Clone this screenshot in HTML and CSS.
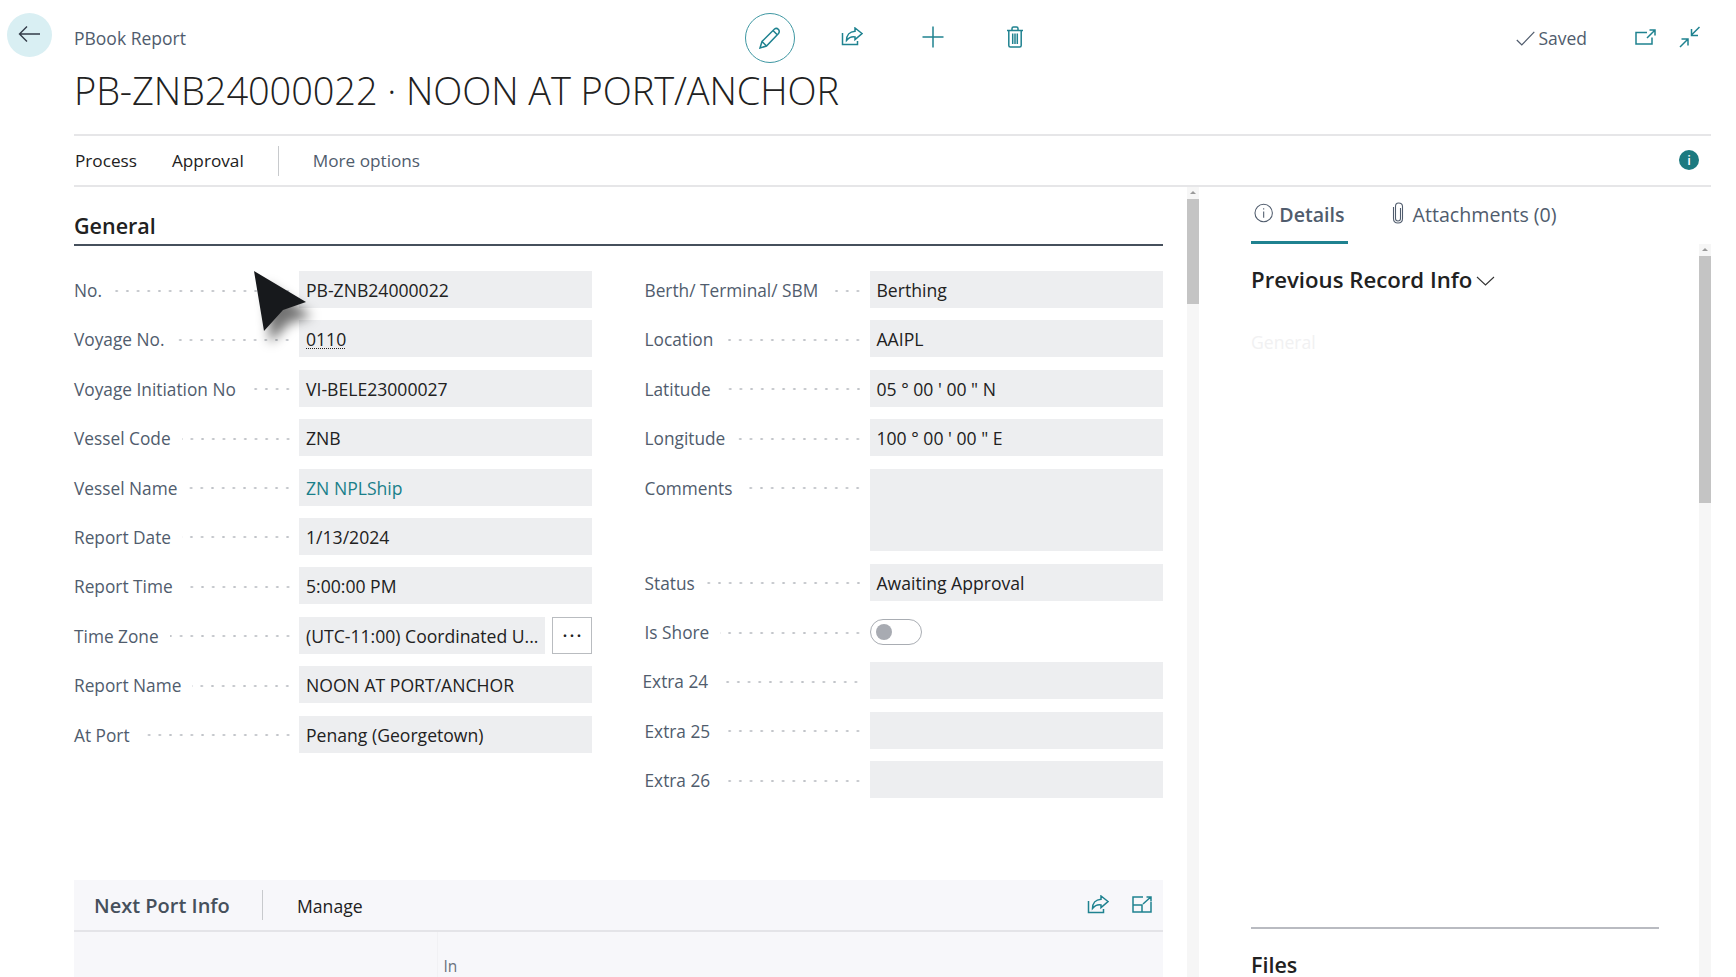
FILE: index.html
```html
<!DOCTYPE html>
<html lang="en">
<head>
<meta charset="UTF-8">
<meta name="viewport" content="width=device-width, initial-scale=1.0">
<title>PBook Report</title>
<link rel="stylesheet" href="styles.css">
</head>
<body>

<div class="page">
  <header class="top">
    <button class="back" type="button" aria-label="Back">
      <svg width="23" height="18" viewBox="0 0 23 18"><path d="M22 9H1.500M9 1.500L1.500 9L9 16.500"/></svg>
    </button>
    <div class="crumb">PBook Report</div>
    <div class="toolbar">
      <button class="tool tool-edit" type="button" aria-label="Edit">
        <svg width="22" height="22" viewBox="0 0 22 22"><path d="M1 21L3 14.500L15.500 2Q17.500 0.500 19.500 2.500Q21 4.500 19.500 6.500L7.500 19ZM3 14.500L7.500 19M14 3.500L18.500 8"/></svg>
      </button>
      <button class="tool" type="button" aria-label="Share">
        <svg width="22" height="19" viewBox="0 0 22 19"><path d="M1.500 6V17.500H16.500V14M21 6.500L14 1V4.200C8.500 4.500 5.500 8.500 5.500 13.500C8 10.500 11 9.500 14 10V12.500Z"/></svg>
      </button>
      <button class="tool" type="button" aria-label="New">
        <svg width="22" height="22" viewBox="0 0 22 22"><path d="M11 0.500V21.500M0.500 11H21.500"/></svg>
      </button>
      <button class="tool" type="button" aria-label="Delete">
        <svg width="18" height="22" viewBox="0 0 18 22"><path d="M1 4.500H17M6 4.500V2.500Q6 1 7.500 1H10.500Q12 1 12 2.500V4.500M2.800 4.500V19.500Q2.800 21 4.300 21H13.700Q15.200 21 15.200 19.500V4.500M6.700 7.500V18M9 7.500V18M11.300 7.500V18"/></svg>
      </button>
    </div>
    <div class="top-right">
      <div class="saved">
        <svg width="19" height="15" viewBox="0 0 19 15"><path d="M0.800 9L5.800 14L18.300 0.800"/></svg>
        Saved
      </div>
      <button class="tool" type="button" aria-label="Open in new window">
        <svg width="21" height="16" viewBox="0 0 21 16"><path d="M12 3.500H1V15H17V8.500M12 9L19.800 1.200M14.500 1H20V6.500"/></svg>
      </button>
      <button class="tool" type="button" aria-label="Collapse">
        <svg width="21" height="22" viewBox="0 0 21 22"><path d="M20.500 1L12.500 9M12.500 3V9.500H19M1 21L9 13M2.500 13H9V19.500"/></svg>
      </button>
    </div>
  </header>

  <h1 class="title">PB-ZNB24000022 · NOON AT PORT/ANCHOR</h1>

  <nav class="actions">
    <a class="action">Process</a>
    <a class="action action-approval">Approval</a>
    <span class="action-sep"></span>
    <a class="action action-more">More options</a>
    <span class="info-dot">i</span>
  </nav>

  <div class="content">
    <main class="left">
      <h2 class="section-title">General</h2>

      <div class="form-grid">
        <div class="form-col">
          <div class="field"><span class="label">No.<i class="dots"></i></span><span class="value">PB-ZNB24000022</span></div>
          <div class="field"><span class="label">Voyage No.<i class="dots"></i></span><span class="value"><u class="dotted">0110</u></span></div>
          <div class="field"><span class="label">Voyage Initiation No<i class="dots"></i></span><span class="value">VI-BELE23000027</span></div>
          <div class="field"><span class="label">Vessel Code<i class="dots"></i></span><span class="value">ZNB</span></div>
          <div class="field"><span class="label">Vessel Name<i class="dots"></i></span><span class="value value-link">ZN NPLShip</span></div>
          <div class="field"><span class="label">Report Date<i class="dots"></i></span><span class="value">1/13/2024</span></div>
          <div class="field"><span class="label">Report Time<i class="dots"></i></span><span class="value">5:00:00 PM</span></div>
          <div class="field"><span class="label">Time Zone<i class="dots"></i></span><span class="value">(UTC-11:00) Coordinated U...</span><button class="more-btn" type="button" aria-label="Choose">···</button></div>
          <div class="field"><span class="label">Report Name<i class="dots"></i></span><span class="value">NOON AT PORT/ANCHOR</span></div>
          <div class="field"><span class="label">At Port<i class="dots"></i></span><span class="value">Penang (Georgetown)</span></div>
        </div>

        <div class="form-col">
          <div class="field"><span class="label">Berth/ Terminal/ SBM<i class="dots"></i></span><span class="value">Berthing</span></div>
          <div class="field"><span class="label">Location<i class="dots"></i></span><span class="value">AAIPL</span></div>
          <div class="field"><span class="label">Latitude<i class="dots"></i></span><span class="value">05 ° 00 ' 00 " N</span></div>
          <div class="field"><span class="label">Longitude<i class="dots"></i></span><span class="value">100 ° 00 ' 00 " E</span></div>
          <div class="field field-tall"><span class="label">Comments<i class="dots"></i></span><span class="value"></span></div>
          <div class="field"><span class="label">Status<i class="dots"></i></span><span class="value">Awaiting Approval</span></div>
          <div class="field"><span class="label">Is Shore<i class="dots"></i></span><span class="toggle"><i class="knob"></i></span></div>
          <div class="field field-shift"><span class="label">Extra 24<i class="dots"></i></span><span class="value"></span></div>
          <div class="field"><span class="label">Extra 25<i class="dots"></i></span><span class="value"></span></div>
          <div class="field"><span class="label">Extra 26<i class="dots"></i></span><span class="value"></span></div>
        </div>
      </div>

      <section class="part">
        <div class="part-head">
          <span class="part-title">Next Port Info</span>
          <span class="part-sep"></span>
          <span class="part-manage">Manage</span>
          <div class="part-tools">
            <button class="tool" type="button" aria-label="Share">
              <svg width="22" height="19" viewBox="0 0 22 19"><path d="M1.500 6V17.500H16.500V14M21 6.500L14 1V4.200C8.500 4.500 5.500 8.500 5.500 13.500C8 10.500 11 9.500 14 10V12.500Z"/></svg>
            </button>
            <button class="tool" type="button" aria-label="Expand">
              <svg width="20" height="17" viewBox="0 0 20 17"><path d="M11 1H1V16H19V6M1 9H10V16M11 8L18.500 1.200M14.500 1H19V5.500"/></svg>
            </button>
          </div>
        </div>
        <div class="part-body"><span class="part-col">In</span></div>
      </section>
    </main>

    <div class="scroll scroll-main">
      <i class="scroll-arrow"></i>
      <i class="scroll-thumb"></i>
    </div>

    <aside class="pane">
      <div class="tabs">
        <div class="tab tab-active">
          <svg width="20" height="20" viewBox="0 0 20 20"><circle cx="10" cy="10" r="9"/><path d="M10 8.500V15M10 5V6.500"/></svg>
          Details
        </div>
        <div class="tab tab-files">
          <svg width="12" height="22" viewBox="0 0 12 22"><path d="M8.500 6V16.500Q8.500 19 6 19Q3.500 19 3.500 16.500V4.500Q3.500 1 6.500 1Q10.500 1 10.500 4.500V16.500Q10.500 21 6 21Q1.500 21 1.500 16.500V5"/></svg>
          Attachments (0)
        </div>
      </div>
      <h3 class="pane-title">Previous Record Info
        <svg width="19" height="10" viewBox="0 0 19 10"><path d="M1 1L9.500 9L18 1"/></svg>
      </h3>
      <div class="pane-ghost">General</div>
      <div class="pane-files">Files</div>
    </aside>

    <div class="scroll scroll-pane">
      <i class="scroll-arrow"></i>
      <i class="scroll-thumb"></i>
    </div>
  </div>

  <div class="cursor">
    <svg width="90" height="90" viewBox="0 0 90 90">
      <defs><filter id="soft" x="-40%" y="-40%" width="180%" height="180%"><feGaussianBlur stdDeviation="6"/></filter></defs>
      <path class="cursor-shadow" d="M16 14L62 46L39 53L20 73Z" filter="url(#soft)"/>
      <path class="cursor-arrow" d="M4 1L56 32L33 40L14 61Z"/>
    </svg>
  </div>
</div>

</body>
</html>
```

FILE: styles.css
```css
* {
  box-sizing: border-box;
}
body {
  margin: 0;
  background-color: #fff;
  color: #212121;
  font-family: 'Open Sans', 'Noto Sans', sans-serif;
}
button {
  padding: 0;
  border: none;
  background: none;
  font-family: inherit;
}
svg {
  display: block;
  fill: none;
  stroke-width: 1.5;
}
.page {
  position: relative;
  width: 1736px;
  height: 977px;
  overflow: hidden;
}

/* top bar */
.top {
  display: flex;
  align-items: center;
  height: 63px;
  padding: 13px 36px 0 7px;
}
.back {
  display: flex;
  align-items: center;
  justify-content: center;
  align-self: flex-start;
  width: 45px;
  height: 44px;
  margin-right: 22px;
  border-radius: 50%;
  background-color: #d9eff3;
}
.back svg {
  stroke: #333c48;
  stroke-width: 1.4;
  margin-top: -2px;
}
.crumb {
  width: 671px;
  font-size: 17.5px;
  color: #505c6d;
}
.toolbar {
  display: flex;
  align-items: center;
  gap: 59.5px;
}
.tool {
  display: flex;
  align-items: center;
  justify-content: center;
  width: 22px;
  height: 22px;
}
.tool svg {
  stroke: #1f8290;
}
.toolbar .tool svg,
.top-right .tool svg {
  margin-top: -3px;
}
.toolbar .tool-edit svg {
  margin-top: 0;
}
.tool-edit {
  width: 50px;
  height: 50px;
  margin-right: -14px;
  border: 1.5px solid #3f98a3;
  border-radius: 50%;
}
.top-right {
  display: flex;
  align-items: center;
  gap: 22px;
  margin-left: auto;
}
.saved {
  display: flex;
  align-items: center;
  gap: 3px;
  margin-right: 25px;
  font-size: 17.5px;
  color: #505c6d;
}
.saved svg {
  stroke: #505c6d;
  stroke-width: 1.2;
}
.title {
  height: 56px;
  margin: 0 0 15px 74px;
  font-size: 38px;
  font-weight: 300;
  line-height: 54px;
  letter-spacing: -0.1px;
  white-space: nowrap;
}

/* action bar */
.actions {
  display: flex;
  align-items: center;
  height: 53px;
  margin: 0 25px 0 74px;
  padding-right: 12px;
  border-top: 2px solid #e6e6e8;
  border-bottom: 2px solid #e6e6e8;
  font-size: 17.2px;
}
.action {
  margin-left: 1px;
}
.action-approval {
  margin-left: 35px;
}
.action-sep {
  width: 1px;
  height: 30px;
  margin: 0 34px;
  background-color: #c8cacd;
}
.action-more {
  margin-left: 0;
  color: #505c6d;
}
.info-dot {
  width: 20px;
  height: 20px;
  margin-left: auto;
  margin-top: -2px;
  border-radius: 50%;
  background-color: #1c7a80;
  color: #fff;
  font-size: 13px;
  font-weight: 600;
  line-height: 20px;
  text-align: center;
}

/* main area */
.content {
  display: flex;
  height: 790px;
}
.left {
  width: 1088.5px;
  margin-left: 74px;
}
.section-title {
  height: 59px;
  margin: 0;
  padding-top: 20px;
  border-bottom: 2px solid #46505c;
  font-size: 21.5px;
  font-weight: 600;
  line-height: 38px;
}
.form-grid {
  display: grid;
  grid-template-columns: 518px 518px;
  gap: 52.5px;
  height: 608.6px;
  margin-top: 25px;
}
.field {
  display: flex;
  height: 37px;
  margin-bottom: 12.4px;
  font-size: 17.6px;
  line-height: 39px;
}
.field-tall {
  height: 82.7px;
}
.label {
  display: flex;
  align-items: center;
  flex: none;
  width: 225px;
  height: 39px;
  padding-right: 6px;
  font-size: 17.3px;
  color: #505c6d;
  white-space: nowrap;
}
.field-shift .label {
  margin-left: -2px;
  margin-right: 2px;
}
.dots {
  flex: 1;
  height: 4px;
  margin-left: 11px;
  background: radial-gradient(circle, #c0c3c8 1px, transparent 1.3px) right center / 10.7px 4px repeat-x;
}
.value {
  flex: 1;
  min-width: 0;
  padding-left: 7px;
  background-color: #edeef0;
  white-space: nowrap;
  overflow: hidden;
}
.value-link {
  color: #1a7f8a;
}
.dotted {
  text-decoration: underline dotted 1px;
  text-underline-offset: 2px;
}
.more-btn {
  flex: none;
  width: 40px;
  height: 37px;
  margin-left: 7.4px;
  border: 1px solid #b9bcc0;
  font-size: 18px;
  font-weight: 600;
  letter-spacing: 2px;
  text-indent: 2px;
  line-height: 1;
  color: #212121;
}
.toggle {
  display: flex;
  align-items: center;
  width: 52px;
  height: 26px;
  margin-top: 5.6px;
  padding-left: 5px;
  border: 1px solid #a9adb3;
  border-radius: 13px;
}
.knob {
  width: 16px;
  height: 16px;
  border-radius: 50%;
  background-color: #a8abb2;
}

/* next port part */
.part {
  background-color: #f7f7fa;
}
.part-head {
  display: flex;
  align-items: center;
  height: 52px;
  padding: 0 10px 0 20px;
  border-bottom: 2px solid #e4e4e8;
}
.part-title {
  width: 168px;
  margin-top: 2px;
  font-size: 20px;
  font-weight: 600;
  color: #46505c;
}
.part-sep {
  width: 1px;
  height: 30px;
  background-color: #c8cacd;
}
.part-manage {
  margin-top: 2px;
  margin-left: 34px;
  font-size: 17.6px;
}
.part-tools {
  display: flex;
  align-items: center;
  gap: 22px;
  margin-left: auto;
}
.part-body {
  height: 46px;
  margin-left: 362.5px;
  padding: 24px 0 0 6px;
  border-left: 1px solid #f1f1f4;
  font-size: 15.5px;
  line-height: 20px;
  color: #6a727d;
}

/* scrollbars */
.scroll {
  flex: none;
  display: flex;
  flex-direction: column;
  align-items: center;
  width: 12px;
  background-color: #f6f6f6;
}
.scroll-main {
  margin-left: 24px;
}
.scroll-pane {
  height: 733px;
  margin-top: 57px;
  margin-left: 39.5px;
}
.scroll-arrow {
  flex: none;
  width: 0;
  height: 0;
  margin: 4px 0 5px;
  border-left: 3px solid transparent;
  border-right: 3px solid transparent;
  border-bottom: 3px solid #9a9a9a;
}
.scroll-thumb {
  width: 100%;
  background-color: #c4c4c4;
}
.scroll-main .scroll-thumb {
  height: 105px;
}
.scroll-pane .scroll-thumb {
  height: 247px;
}

/* details pane */
.pane {
  flex: none;
  display: flex;
  flex-direction: column;
  width: 408px;
  height: 790px;
  margin-left: 52.5px;
  overflow: hidden;
}
.tabs {
  display: flex;
  gap: 41px;
  height: 57px;
}
.tab {
  display: flex;
  align-items: center;
  gap: 6px;
  height: 57px;
  padding: 0 3px;
  border-bottom: 3px solid transparent;
  font-size: 19.6px;
  color: #505c6d;
}
.tab svg {
  stroke: #505c6d;
  stroke-width: 1.1;
  margin-top: -3px;
}
.tab-active {
  width: 96.6px;
  border-bottom-color: #1f8290;
  font-weight: 600;
  white-space: nowrap;
}
.tab-files {
  gap: 9px;
}
.pane-title {
  display: flex;
  align-items: center;
  gap: 4px;
  height: 50px;
  margin: 10px 0 0;
  font-size: 22.2px;
  font-weight: 600;
}
.pane-title svg {
  stroke: #333;
  stroke-width: 1.1;
  margin-top: 4px;
}
.pane-ghost {
  margin: 26px 0 0;
  font-size: 17.6px;
  color: #f1f1f2;
}
.pane-files {
  height: 50.5px;
  margin-top: auto;
  padding: 21px 0 0;
  border-top: 2.5px solid #b9bbc1;
  font-size: 21.5px;
  font-weight: 600;
  line-height: 30px;
}

/* mouse pointer from the recording */
.cursor {
  position: absolute;
  left: 250px;
  top: 270px;
  width: 90px;
  height: 90px;
}
.cursor-shadow {
  fill: rgba(0, 0, 0, 0.55);
  stroke: none;
}
.cursor-arrow {
  fill: #17191c;
  stroke: none;
}
```
